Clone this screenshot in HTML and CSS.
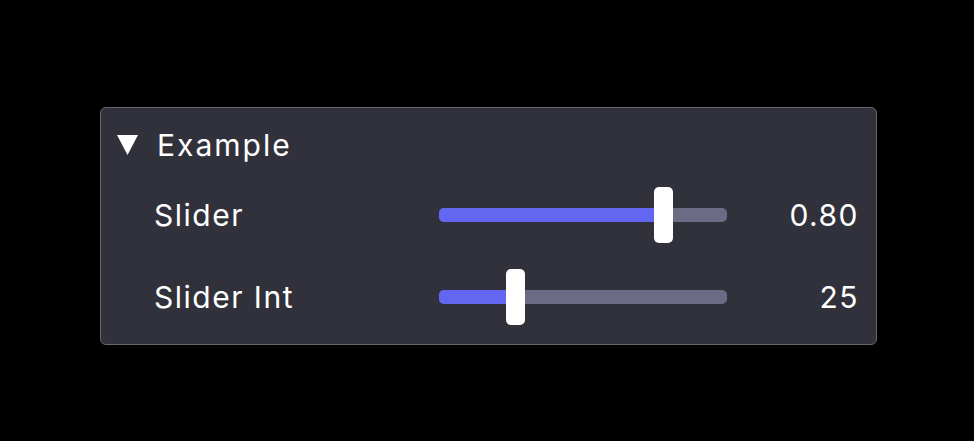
FILE: index.html
```html
<!DOCTYPE html>
<html>
<head>
<meta charset="utf-8">
<link rel="stylesheet" href="styles.css">
</head>
<body>
<div class="panel">
  <div class="header">
    <svg class="tri" width="21" height="20" viewBox="0 0 21 20"><polygon points="0,0 21,0 10.5,20" fill="#fff"/></svg>
    <span class="title">Example</span>
  </div>
  <div class="row">
    <span class="label">Slider</span>
    <div class="track">
      <div class="fill" style="width: 224px"></div>
      <div class="handle" style="left: 215px"></div>
    </div>
    <span class="value">0.80</span>
  </div>
  <div class="row">
    <span class="label">Slider Int</span>
    <div class="track">
      <div class="fill" style="width: 77px"></div>
      <div class="handle" style="left: 67px"></div>
    </div>
    <span class="value">25</span>
  </div>
</div>
</body>
</html>
```
FILE: styles.css
```css
html, body {
  margin: 0;
  padding: 0;
  background: #000;
}
body {
  width: 974px;
  height: 441px;
  overflow: hidden;
  font-family: Inter, "Noto Sans", sans-serif;
  color: #fff;
  letter-spacing: 1.5px;
}
.panel {
  margin: 107px 0 0 100px;
  width: 775px;
  height: 236px;
  border: 1px solid #676772;
  border-radius: 6px;
  background: #31313c;
  box-sizing: content-box;
}
.header {
  display: flex;
  align-items: center;
  height: 66px;
  padding: 8px 0 0 16px;
  box-sizing: border-box;
  gap: 19px;
}
.title {
  font-size: 30px;
  line-height: 36px;
  letter-spacing: 2px;
}
.row {
  display: flex;
  align-items: center;
  height: 82px;
  padding: 0 17px 0 53px;
}
.label {
  flex: 1;
  font-size: 30px;
}
.track {
  position: relative;
  width: 288px;
  height: 14px;
  border-radius: 5px;
  background: #6b6b85;
}
.fill {
  position: absolute;
  left: 0;
  top: 0;
  bottom: 0;
  border-radius: 5px;
  background: #6366f1;
}
.handle {
  position: absolute;
  top: -21px;
  width: 19px;
  height: 56px;
  border-radius: 5px;
  background: #fff;
}
.value {
  width: 132px;
  text-align: right;
  font-size: 30px;
}
```
